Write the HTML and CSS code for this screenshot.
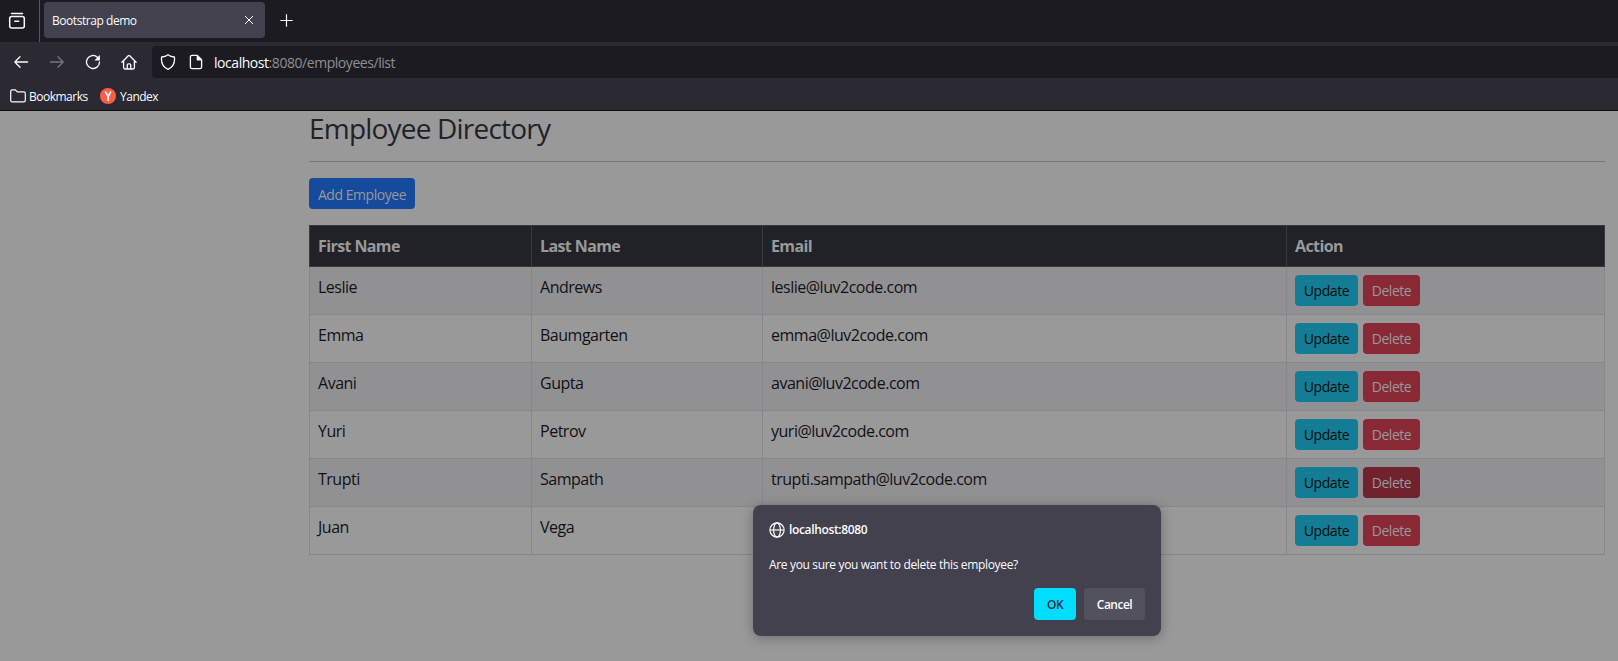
FILE: index.html
```html
<!DOCTYPE html>
<html lang="en">
<head>
<meta charset="utf-8">
<title>Bootstrap demo</title>
<link rel="stylesheet" href="styles.css">
</head>
<body>
<header class="browser">
  <div class="tabbar">
    <div class="tabview">
      <svg width="18" height="18" viewBox="0 0 18 18" fill="none" stroke="#fbfbfe" stroke-width="1.5" stroke-linecap="round"><path d="M3.5 1.6h11"/><rect x="1.7" y="4.5" width="14.6" height="11.6" rx="2"/><path d="M6.8 9.3h3.9"/></svg>
    </div>
    <div class="tab">
      <span class="tab-title">Bootstrap demo</span>
      <svg width="10" height="10" viewBox="0 0 10 10" stroke="#fbfbfe" stroke-width="1"><path d="M1 1l8 8M9 1l-8 8"/></svg>
    </div>
    <svg class="newtab" width="13" height="13" viewBox="0 0 13 13" stroke="#fbfbfe" stroke-width="1.2"><path d="M6.5 .3v12.4M.3 6.5h12.4"/></svg>
  </div>
  <nav class="toolbar">
    <svg class="nav-icon" viewBox="0 0 16 16"><path d="M14.6 8H2M7 2.8L1.8 8 7 13.2"/></svg>
    <svg class="nav-icon dim" viewBox="0 0 16 16"><path d="M1.4 8H14M9 2.8L14.2 8 9 13.2"/></svg>
    <svg class="nav-icon" viewBox="0 0 16 16"><path d="M12.4 3.2A6.5 6.5 0 1 0 14.5 8"/><path class="solid" d="M14.9 1v5.5H9.4z"/></svg>
    <svg class="nav-icon" viewBox="0 0 16 16"><path d="M.9 8.2L7.3 1.7q.7-.6 1.4 0L15.1 8.2M2.6 7v6.6q0 1.4 1.4 1.4h8q1.4 0 1.4-1.4V7M6.3 14.8v-4q0-1 1-1h1.4q1 0 1 1v4"/></svg>
    <div class="urlbar">
      <svg class="nav-icon" viewBox="0 0 16 16"><path d="M8 .8C6.2 2.2 3.8 2.9 1.6 3 .9 8.7 3 13 8 15.3 13 13 15.1 8.7 14.4 3 12.2 2.9 9.8 2.2 8 .8z"/></svg>
      <svg class="nav-icon doc" viewBox="0 0 16 16"><path d="M9.3 1.4H4Q2.4 1.400 2.4 3v10Q2.4 14.6 4 14.6h8q1.6 0 1.6-1.6V5.800z"/><path class="solid" d="M8.700 1v5.500h5.500z"/></svg>
      <span class="url"><b>localhost</b>:8080/employees/list</span>
    </div>
  </nav>
  <div class="bookmarks">
    <svg width="16" height="14" viewBox="0 0 16 14" fill="none" stroke="#fbfbfe" stroke-width="1.2"><path d="M.7 11.4V2.2Q.7.8 2.1.8h3.200l2 2h6.600q1.400 0 1.400 1.400v7.200q0 1.400-1.400 1.400H2.100Q.7 12.800.7 11.400z"/></svg>
    <span class="bm-folder">Bookmarks</span>
    <svg class="yandex" width="16" height="16" viewBox="0 0 16 16"><circle cx="8" cy="8" r="8" fill="#fc5b45"/><path d="M5.2 3.4L8.2 8.6 10.8 3.4M8.1 8.2v4.8" fill="none" stroke="#fff" stroke-width="1.7"/></svg>
    <span class="bm-link">Yandex</span>
  </div>
</header>
<main class="page">
  <h3 class="heading">Employee Directory</h3>
  <hr class="rule">
  <a class="btn primary">Add Employee</a>
  <table class="table">
    <colgroup><col class="c1"><col class="c2"><col class="c3"><col class="c4"></colgroup>
    <thead><tr><th>First Name</th><th>Last Name</th><th>Email</th><th>Action</th></tr></thead>
    <tbody>
      <tr><td>Leslie</td><td>Andrews</td><td>leslie@luv2code.com</td><td><div class="actions"><a class="btn info">Update</a><a class="btn danger">Delete</a></div></td></tr>
      <tr><td>Emma</td><td>Baumgarten</td><td>emma@luv2code.com</td><td><div class="actions"><a class="btn info">Update</a><a class="btn danger">Delete</a></div></td></tr>
      <tr><td>Avani</td><td>Gupta</td><td>avani@luv2code.com</td><td><div class="actions"><a class="btn info">Update</a><a class="btn danger">Delete</a></div></td></tr>
      <tr><td>Yuri</td><td>Petrov</td><td>yuri@luv2code.com</td><td><div class="actions"><a class="btn info">Update</a><a class="btn danger">Delete</a></div></td></tr>
      <tr><td>Trupti</td><td>Sampath</td><td>trupti.sampath@luv2code.com</td><td><div class="actions"><a class="btn info">Update</a><a class="btn danger active">Delete</a></div></td></tr>
      <tr><td>Juan</td><td>Vega</td><td></td><td><div class="actions"><a class="btn info">Update</a><a class="btn danger">Delete</a></div></td></tr>
    </tbody>
  </table>
</main>
<section class="dialog">
  <div class="origin">
    <svg width="16" height="16" viewBox="0 0 16 16" fill="none" stroke="#fbfbfe" stroke-width="1.2"><circle cx="8" cy="8" r="7.1"/><ellipse cx="8" cy="8" rx="3.4" ry="7.1"/><path d="M1 8h14"/></svg>
    <span>localhost:8080</span>
  </div>
  <p class="message">Are you sure you want to delete this employee?</p>
  <div class="buttons"><button class="ok">OK</button><button class="cancel">Cancel</button></div>
</section>
</body>
</html>
```
FILE: styles.css
```css
* { box-sizing: border-box; }
body {
  margin: 0;
  height: 661px;
  overflow: hidden;
  background: #99999a;
  font-family: "Open Sans", "Noto Sans", sans-serif;
}
svg { display: block; flex: none; }
.browser {
  height: 111px;
  background: #2b2a33;
  border-bottom: 1px solid #0c0c0d;
  color: #fbfbfe;
  font-size: 12px;
  white-space: nowrap;
}
.tabbar {
  display: flex;
  height: 42px;
  background: #1c1b22;
}
.tabview {
  width: 40px;
  padding: 12px 0 0 8px;
  border-right: 1px solid #58575e;
}
.tab {
  display: flex;
  align-items: center;
  justify-content: space-between;
  width: 221px;
  height: 36px;
  margin: 2px 0 0 4px;
  padding: 0 11px 0 8px;
  border-radius: 4px;
  background: #42414d;
}
.tab-title { padding-top: 1px; letter-spacing: -0.45px; }
.newtab { margin: 14px 0 0 15px; }
.toolbar {
  display: flex;
  align-items: center;
  height: 40px;
  padding-left: 13px;
}
.nav-icon {
  width: 16px;
  height: 16px;
  margin-right: 20px;
  fill: none;
  stroke: #fbfbfe;
  stroke-width: 1.3;
  stroke-linecap: round;
  stroke-linejoin: round;
}
.nav-icon.dim { stroke: #77767d; }
.nav-icon .solid { fill: #fbfbfe; stroke: none; }
.urlbar {
  display: flex;
  flex: 1;
  align-items: center;
  height: 32px;
  margin-left: -5px;
  padding-left: 8px;
  border-radius: 4px 0 0 4px;
  background: #1c1b22;
}
.urlbar .nav-icon { margin-right: 12px; }
.urlbar .nav-icon.doc { margin-right: 10px; }
.url { padding-top: 2px; font-size: 14px; line-height: 20px; letter-spacing: -0.45px; color: #8f8e94; }
.url b { color: #fbfbfe; font-weight: 400; }
.bookmarks {
  display: flex;
  align-items: center;
  height: 28px;
  padding-left: 10px;
}
.bm-folder { margin-left: 3px; width: 59px; letter-spacing: -0.5px; }
.yandex { margin-left: 12px; }
.bm-link { margin-left: 4px; letter-spacing: -0.5px; }

.page { padding: 1px 13px 0 309px; }
.heading {
  margin: 0 0 16px;
  font-size: 28px;
  font-weight: 400;
  line-height: 33px;
  letter-spacing: -0.8px;
  color: #212227;
}
.rule { height: 1px; margin: 0 0 16px; border: 0; background: #77777b; }
.btn {
  display: flex;
  align-items: center;
  justify-content: center;
  height: 31px;
  padding-top: 1px;
  border-radius: 4px;
  font-size: 14px;
  letter-spacing: -0.45px;
  white-space: nowrap;
}
.primary { width: 106px; margin-bottom: 16px; background: #154a9c; color: #99999a; }
.table {
  width: 1296px;
  table-layout: fixed;
  border-collapse: collapse;
  font-size: 16px;
  line-height: 24px;
  color: #111115;
}
.c1 { width: 222px; }
.c2 { width: 231px; }
.c3 { width: 524px; }
.c4 { width: 318px; }
th, td { padding: 8px; text-align: left; vertical-align: top; border: 1px solid #86868b; }
th {
  height: 41px;
  background: #212227;
  border-color: #393a3e;
  color: #99999a;
  font-weight: 700;
  letter-spacing: -0.6px;
}
td { height: 48px; letter-spacing: -0.49px; }
tbody tr:nth-child(odd) { background: #919193; }
.actions { display: flex; gap: 5px; }
.info { width: 63px; background: #157c96; color: #05090d; }
.danger { width: 57px; background: #892936; color: #99999a; }
.danger.active { background: #70222e; }

.dialog {
  position: absolute;
  left: 753px;
  top: 505px;
  width: 408px;
  height: 131px;
  padding: 16px;
  border-radius: 8px;
  background: #42414d;
  color: #fbfbfe;
  font-size: 12px;
  line-height: 18px;
  box-shadow: 0 2px 12px rgba(12, 12, 13, 0.3);
}
.origin { display: flex; align-items: center; gap: 4px; font-weight: 600; letter-spacing: -0.35px; }
.message { margin: 17px 0 14px; letter-spacing: -0.34px; }
.buttons { display: flex; justify-content: flex-end; gap: 8px; }
.buttons button {
  height: 32px;
  padding: 1px 0 0;
  border: 0;
  border-radius: 4px;
  font: 600 12px "Open Sans", sans-serif;
  letter-spacing: -0.5px;
}
.ok { width: 42px; background: #00ddff; color: #2b2a33; }
.cancel { width: 61px; background: #52515e; color: #fbfbfe; }
```
